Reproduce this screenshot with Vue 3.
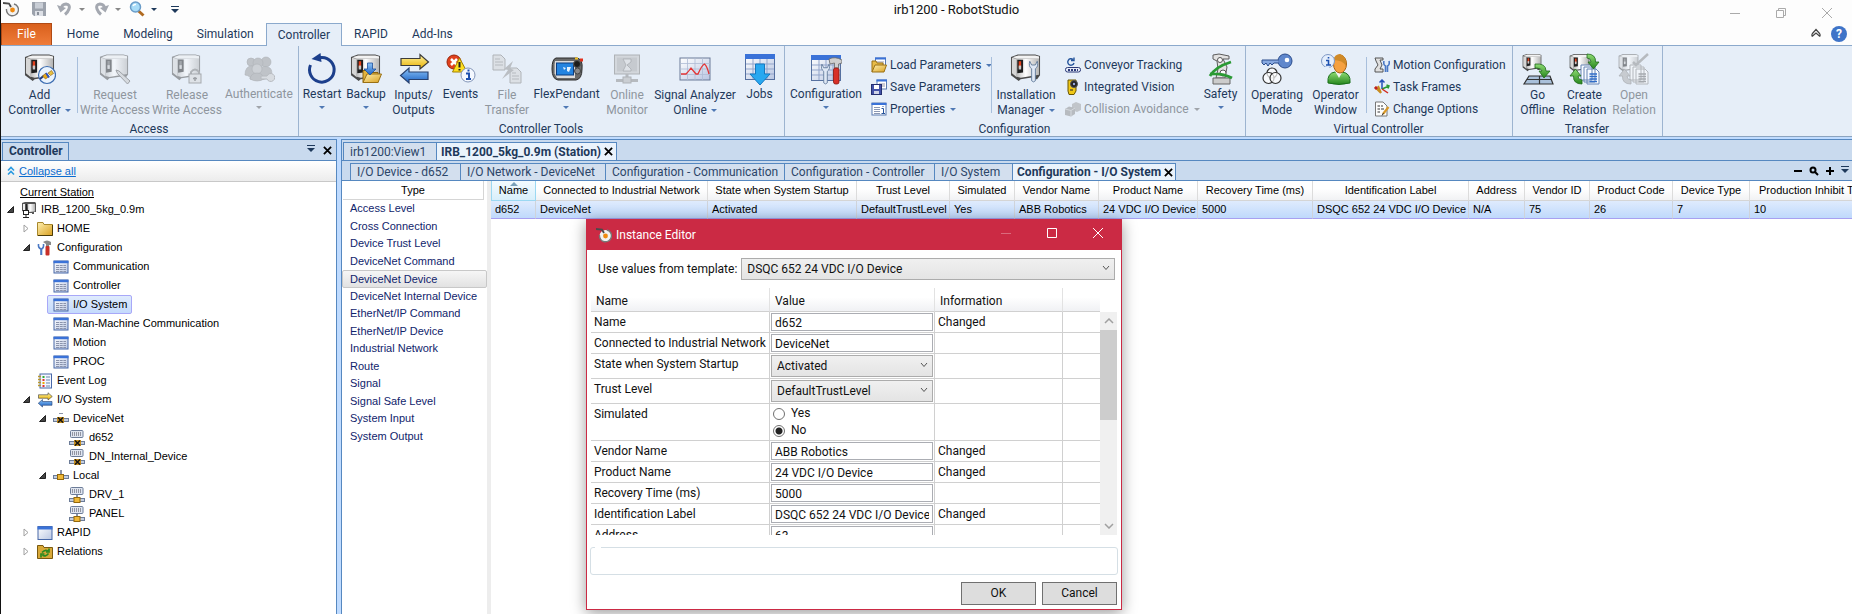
<template>
  <div class="app">
    <svg class="defs" width="0" height="0" aria-hidden="true">
      <defs>
        <linearGradient id="g-metal" x1="0" x2="1"><stop offset="0" stop-color="#bdbdbd" /><stop offset=".4" stop-color="#ffffff" /><stop offset="1" stop-color="#b4b4b4" /></linearGradient>
        <linearGradient id="g-folder" x1="0" y1="0" x2="1" y2="1"><stop offset="0" stop-color="#fff0b0" /><stop offset="1" stop-color="#d9a020" /></linearGradient>
        <linearGradient id="g-yellow" x1="0" y1="0" x2="0" y2="1"><stop offset="0" stop-color="#fff3a0" /><stop offset="1" stop-color="#e8b000" /></linearGradient>
        <linearGradient id="g-blue" x1="0" y1="0" x2="0" y2="1"><stop offset="0" stop-color="#8cc4f8" /><stop offset="1" stop-color="#1c62c4" /></linearGradient>
        <linearGradient id="g-grid" x1="0" y1="0" x2="1" y2="1"><stop offset="0" stop-color="#ffffff" /><stop offset="1" stop-color="#b9c6e2" /></linearGradient>
        <linearGradient id="g-green" x1="0" y1="0" x2="0" y2="1"><stop offset="0" stop-color="#8fdc74" /><stop offset="1" stop-color="#25861c" /></linearGradient>
      </defs>

      <symbol id="i-cabinet" viewBox="0 0 32 32">
        <path d="M1 4 L8 1.500 H26 L31 3 V23 L28 27 H25 L24 25 L11 27 L9 29 L1 23 Z" fill="#4a4a4a" />
        <path d="M2 5 L7 6 V25 L2 21 Z" fill="#d6d6d6" />
        <path d="M7 6 H30 V22.500 L11 25.500 L7 24.500 Z" fill="url(#g-metal)" />
        <path d="M2.500 4.500 L8.500 2.500 H26 L30 3.500 V6 H7 Z" fill="#f2f2f2" />
        <path d="M7.500 7 H13.500 V20 L7.500 21 Z" fill="#1f1f1f" />
        <rect x="9" y="8.500" width="2.500" height="7" fill="#e2401c" />
        <rect x="9" y="13" width="2.500" height="4" fill="#c9c9c9" />
      </symbol>
      <symbol id="i-wrench" viewBox="0 0 16 32">
        <path d="M3 3 Q1 10 5.500 13 V29 Q8 32 10.500 29 V13 Q15 10 13 3 L10.500 8 H5.500 Z" fill="#dfe8f5" stroke="#5f7898" stroke-width="1.200" />
      </symbol>
      <symbol id="i-add" viewBox="0 0 32 32">
        <use href="#i-cabinet" width="31" height="31" />
        <circle cx="23" cy="22" r="8.500" fill="#eaf3fd" stroke="#3c6cb0" stroke-width="1.200" />
        <path d="M16 26 L20 22.500" stroke="#223a80" stroke-width="2" />
        <path d="M18.500 23 L22 20 L25 23.500 L21.500 26 Z" fill="#e8a818" stroke="#8a5a08" stroke-width=".6" />
        <path d="M24 20 L27.500 17.500 L29.500 20.500 L26.500 22.500Z" fill="#e8c040" stroke="#8a5a08" stroke-width=".6" />
        <path d="M22 20 L25 24.500" stroke="#2c50c0" stroke-width="2" />
      </symbol>
      <symbol id="i-request" viewBox="0 0 32 32">
        <use href="#i-cabinet" width="30" height="30" />
        <path d="M17 17 L20 18 L31 28 L28.500 31 L18.500 20.500 Z" fill="#c8c8c8" stroke="#555" />
      </symbol>
      <symbol id="i-release" viewBox="0 0 32 32">
        <use href="#i-cabinet" width="30" height="30" />
        <path d="M20 22 V19 Q24 14 28 19 V22" fill="none" stroke="#777" stroke-width="2" />
        <rect x="18" y="21" width="12" height="9" fill="#d8d8d8" stroke="#666" />
        <path d="M24 24 V28 M22 25.500 H26" stroke="#555" stroke-width="1.500" />
      </symbol>
      <symbol id="i-auth" viewBox="0 0 32 32">
        <g fill="#9a9a9a" stroke="#777" stroke-width=".6">
          <circle cx="8" cy="9" r="4" /><circle cx="23" cy="9" r="5" /><circle cx="15" cy="10" r="5" />
          <path d="M2 22 Q2 13 9 13 Q13 13 14 17 Q20 11 27 15 Q30 18 28 24 L22 26 Q14 29 7 26 Q8 23 2 22Z" />
          <circle cx="14" cy="16" r="5" fill="#b5b5b5" />
          <path d="M7 26 Q8 20 14 20 Q20 20 21 26 Q14 30 7 26Z" />
        </g>
        <path d="M18 23 H24 A4 4 0 1 1 24 26 H18Z" fill="#ccc" stroke="#888" />
      </symbol>
      <symbol id="i-restart" viewBox="0 0 32 32">
        <path d="M4.500 12 A12.300 12.300 0 1 0 16 4.500 H12" fill="none" stroke="#1c3f8c" stroke-width="3" />
        <path d="M14.500 0 L15.500 9 L5.500 6 Z" fill="#1c3f8c" />
      </symbol>
      <symbol id="i-folder" viewBox="0 0 20 16">
        <path d="M1 15 V3 H7 L9 5 H16 V15Z" fill="#e3b33c" stroke="#8a6310" />
        <path d="M1 15 L5 6.500 H19.500 L16 15 Z" fill="url(#g-folder)" stroke="#9a7014" />
      </symbol>
      <symbol id="i-backup" viewBox="0 0 32 32">
        <use href="#i-cabinet" width="31" height="31" />
        <use href="#i-folder" x="12" y="14" width="20" height="17" />
        <path d="M17.500 10 H22.500 V16 H26 L20 22 L14 16 H17.500 Z" fill="url(#g-blue)" stroke="#1c4f9c" stroke-width=".8" />
      </symbol>
      <symbol id="i-inout" viewBox="0 0 32 32">
        <path d="M3 5.500 H22 V1.500 L30.500 9 L22 16 V12.500 H3 Z" fill="url(#g-yellow)" stroke="#3b3b3b" stroke-width="1.200" />
        <path d="M30 19 H11 V15 L2.500 22.500 L11 30 V26.500 H30 Z" fill="url(#g-blue)" stroke="#27406e" stroke-width="1.200" />
      </symbol>
      <symbol id="i-events" viewBox="0 0 32 32">
        <circle cx="9" cy="9" r="7" fill="#e0401c" stroke="#9a2408" />
        <path d="M6 6 L12 12 M12 6 L6 12" stroke="#fff" stroke-width="2.500" />
        <path d="M14.500 5 L22 19 H7.500 Z" fill="#ffdf20" stroke="#a08000" />
        <path d="M14.500 9 V14.500 M14.500 16 V17.500" stroke="#222" stroke-width="2" />
        <circle cx="23" cy="22" r="7" fill="#f4f8ff" stroke="#8496b8" />
        <path d="M21 20.500 H24 V26 M21 26 H26 M23.500 16.500 V18.500" stroke="#1c50b0" stroke-width="2" fill="none" />
      </symbol>
      <symbol id="i-transfer" viewBox="0 0 32 32">
        <path d="M2 2 H10 L14 6 V17 H2 Z M19 15 H26 L30 19 V30 H19Z" fill="#d4d4d4" stroke="#7a7a7a" />
        <path d="M4 6 H9 M4 9 H12 M4 12 H12 M21 20 H25 M21 23 H28 M21 26 H28" stroke="#888" />
        <path d="M22 8 L13 16 L17 17 L11 26 L23 17 L19 15.500 Z" fill="#909090" />
      </symbol>
      <symbol id="i-flex" viewBox="0 0 32 32">
        <path d="M5 5 H26 Q32 6 31 16 Q31 26 25 27 H7 Q1 26 1 16 Q1 6 5 5Z" fill="#6a6a6a" stroke="#2a2a2a" />
        <path d="M4 8 H24 V25 H6 Q2 20 4 8Z" fill="#dcdcdc" /><path d="M3.500 11 V21" stroke="#999" />
        <rect x="5.500" y="10" width="17" height="12" fill="#2484e0" stroke="#0b3c80" />
        <path d="M12 14 L15 15 L13 17Z M16 14 H20 L18 19 L16 18Z" fill="#e4f2ff" />
        <circle cx="26" cy="11" r="3.500" fill="#1b1b1b" stroke="#555" /><circle cx="26.500" cy="18" r="3" fill="#8a8a8a" stroke="#444" />
        <rect x="29" y="5.500" width="3" height="3" fill="#e2301c" /><rect x="24" y="4.500" width="3" height="2" fill="#f0c020" />
      </symbol>
      <symbol id="i-monitor" viewBox="0 0 32 32">
        <rect x="3.500" y="2" width="25" height="19" fill="#c2c2c2" stroke="#777" /><rect x="6" y="4.500" width="20" height="14" fill="#a8a8a8" />
        <path d="M12 6 H20 V9 L16 12 L20 16 V18 H12 L15 12Z" fill="#d8d8d8" stroke="#666" stroke-width=".7" />
        <path d="M16 21 V25 M5 27.500 H27" stroke="#888" stroke-width="3" /><rect x="12" y="24" width="8" height="6" fill="#b0b0b0" stroke="#777" />
      </symbol>
      <symbol id="i-signal" viewBox="0 0 32 32">
        <rect x="1" y="5" width="30" height="22" fill="url(#g-grid)" stroke="#6a7a98" />
        <path d="M1 10.500 H31 M1 16 H31 M1 21.500 H31 M8.500 5 V27 M16 5 V27 M23.500 5 V27" stroke="#aebbd4" stroke-width=".8" />
        <path d="M2 21 H7 Q10 18 12 15 L17 21 H19 Q23 12 25.500 11 Q28 13 30 21" fill="none" stroke="#e43434" stroke-width="1.300" />
      </symbol>
      <symbol id="i-grid" viewBox="0 0 32 32">
        <rect x="1.500" y="1.500" width="29" height="25" fill="url(#g-grid)" stroke="#56709f" />
        <rect x="1" y="1" width="30" height="5" fill="#3a72d8" />
        <path d="M2 11 H30 M2 16 H30 M2 21 H30 M9 6 V26 M16 6 V26 M23 6 V26" stroke="#93a5cb" />
      </symbol>
      <symbol id="i-jobs" viewBox="0 0 32 32">
        <use href="#i-grid" width="32" height="32" />
        <path d="M11.500 11 H20.500 V21 H26 L16 32 L6 21 H11.500 Z" fill="#28a8f0" stroke="#1478c0" />
      </symbol>
      <symbol id="i-config" viewBox="0 0 32 32">
        <use href="#i-grid" y="1" width="32" height="32" />
        <use href="#i-wrench" x="9" y="9" width="13" height="23" />
        <path d="M19 6 Q25 3 32 7 V10 L28.500 11 V15 H24.500 V10 L20 11Z" fill="#cfcfcf" stroke="#666" stroke-width=".8" />
        <rect x="23.500" y="15" width="5.500" height="16" rx="2" fill="#d83028" stroke="#8a140c" stroke-width=".8" />
      </symbol>
      <symbol id="i-install" viewBox="0 0 32 32">
        <use href="#i-cabinet" width="31" height="31" />
        <use href="#i-wrench" x="17" y="6" width="13" height="24" />
      </symbol>
      <symbol id="i-arm" viewBox="0 0 32 32">
        <path d="M8 2 L14 1 L24 3 V6 L18 6 L22 14 L20 25 H11 L13 16 L12 8 L8 6 Z" fill="#e2e2e2" stroke="#5c5c5c" />
        <path d="M8 25 H25 V31 H8 Z" fill="#cccccc" stroke="#666" /><circle cx="15" cy="7" r="2.500" fill="#fff" stroke="#555" /><circle cx="18" cy="20" r="3" fill="#fff" stroke="#555" />
      </symbol>
      <symbol id="i-safety" viewBox="0 0 32 32">
        <use href="#i-arm" width="32" height="32" />
        <path d="M26 9 Q10 14 5 23 M5 21 Q18 20 27 25" fill="none" stroke="#2a9a34" stroke-width="2.800" />
      </symbol>
      <symbol id="i-key" viewBox="0 0 32 32">
        <circle cx="24" cy="8" r="7" fill="#5f87cc" stroke="#2b4c8c" /><circle cx="26" cy="7" r="2.300" fill="#fff" />
        <path d="M17 7 H1 V10 L3 12 L5 10 L7 13 L9 10 L11 12 L13 10 H18" fill="#86a8e0" stroke="#2b4c8c" />
        <g fill="#fff" fill-opacity=".7" stroke="#333" stroke-width="1.200"><circle cx="11" cy="20" r="5" /><circle cx="7.500" cy="25" r="5.500" /><circle cx="14.500" cy="25" r="5.500" /></g>
      </symbol>
      <symbol id="i-operator" viewBox="0 0 32 32">
        <path d="M8 30 Q7 20 15 19 H22 Q31 20 30 30 Q19 33 8 30Z" fill="url(#g-green)" stroke="#1a701a" />
        <path d="M15 18 L19 25 L23 18Z" fill="#f5f5f5" />
        <ellipse cx="20" cy="11" rx="6.500" ry="9" fill="#f5a040" stroke="#a86010" />
        <path d="M13 7 Q15 1 20 1 Q27 3 26 13 Q23 7 13 7Z" fill="#d08a28" />
        <circle cx="8" cy="8" r="6.500" fill="#e4eefc" stroke="#7f98c4" /><path d="M5 14 L3 19 L10 14Z" fill="#e4eefc" />
        <path d="M6 7.500 H8.500 V12 M6 12 H11 M8.500 4 V5.500" stroke="#1c50b0" stroke-width="1.600" fill="none" />
      </symbol>
      <symbol id="i-offline" viewBox="0 0 32 32">
        <use href="#i-cabinet" width="20" height="20" />
        <path d="M7 23 H28 L31 31 H2 Z M5 26.500 H30 M17.500 23 V31" fill="#a9c0da" stroke="#333" stroke-width="1.200" />
        <path d="M13 11 Q24 10 24 18 H28 L22 25 L17 18 H20 Q19 15 13 15 Z" fill="url(#g-green)" stroke="#1f6a1a" stroke-width=".8" />
      </symbol>
      <symbol id="i-docs" viewBox="0 0 32 32">
        <path d="M12 12 H23 V27 H12Z M15 14 H26 V29 H15Z M18 16 H27 L30 19 V31 H18 Z" fill="#f8fbff" stroke="#6684b4" />
        <path d="M20.500 21 H28 M20.500 23.500 H28 M20.500 26 H28 M20.500 28.500 H28" stroke="#2f6cc8" stroke-width="1.300" />
      </symbol>
      <symbol id="i-relation" viewBox="0 0 32 32">
        <use href="#i-cabinet" width="21" height="21" />
        <use href="#i-docs" width="32" height="32" />
        <path d="M18 1 Q27 1 26.500 9 H30 L24.500 16 L19 9 H22 Q22 5 18 5Z" fill="url(#g-green)" stroke="#1f6a1a" stroke-width=".8" />
        <path d="M13 31 Q4 31 4.500 23 H1 L6.500 16 L12 23 H9 Q9 27 13 27Z" fill="url(#g-green)" stroke="#1f6a1a" stroke-width=".8" />
      </symbol>
      <symbol id="i-openrel" viewBox="0 0 32 32">
        <use href="#i-cabinet" width="21" height="21" />
        <use href="#i-docs" width="32" height="32" />
        <path d="M30 1 L18 12 L15 9" fill="none" stroke="#888" stroke-width="2.500" />
        <path d="M13 31 Q4 31 4.500 23 H1 L6.500 16 L12 23 H9 Q9 27 13 27Z" fill="#aaa" stroke="#777" stroke-width=".8" />
      </symbol>

      <symbol id="i-load" viewBox="0 0 16 16">
        <rect x="4.500" y="1" width="10" height="9" fill="#fff" stroke="#5a7ab0" /><path d="M4 1.500 H15" stroke="#3a72d8" stroke-width="2" /><path d="M6 5 H13 M6 7 H13" stroke="#99a" />
        <path d="M1 15 V4 H5 L6 6 H12 V8" fill="#e8bc48" stroke="#9a7014" /><path d="M1 15 L4 8 H15.500 L13 15Z" fill="url(#g-folder)" stroke="#9a7014" />
      </symbol>
      <symbol id="i-saveparam" viewBox="0 0 16 16">
        <rect x="6" y="1" width="9.500" height="9" fill="#fff" stroke="#5a7ab0" /><path d="M5.500 1.500 H16" stroke="#3a72d8" stroke-width="2" /><path d="M8 5 H14 M8 7 H14" stroke="#99a" />
        <rect x=".5" y="5.500" width="10" height="10" fill="#4352a8" stroke="#252f70" /><rect x="3" y="6" width="5" height="4" fill="#fff" /><rect x="3" y="12" width="5" height="3" fill="#cfd4e8" />
      </symbol>
      <symbol id="i-props" viewBox="0 0 16 16">
        <rect x="1" y="2" width="14" height="12" fill="#fff" stroke="#5a7ab0" /><path d="M.5 3 H15.500" stroke="#3a72d8" stroke-width="2" />
        <path d="M3 6.500 H9 M3 8.500 H9 M3 10.500 H9 M3 12.500 H9" stroke="#8a97b4" /><path d="M10.500 7.500 H12.500 V12 M10.500 12.500 H14 M12 5 V6" stroke="#26539c" fill="none" />
      </symbol>
      <symbol id="i-conveyor" viewBox="0 0 16 16">
        <path d="M8 2.500 A3.200 3.200 0 1 0 9 6 M9 .5 V3.500 H6" fill="none" stroke="#24549c" stroke-width="1.400" />
        <rect x=".5" y="10.500" width="15" height="4.500" rx="2" fill="#e8ecf8" stroke="#2b3a78" /><path d="M3 13 H13" stroke="#2b3a78" stroke-width="2" stroke-dasharray="2 1" />
      </symbol>
      <symbol id="i-vision" viewBox="0 0 16 16">
        <path d="M3 1 H11 V12 L9 15.500 H4 L3 12Z" fill="#f0c818" stroke="#6a5600" /><circle cx="9" cy="5" r="3.500" fill="#222" stroke="#555" /><circle cx="9" cy="5" r="1.200" fill="#9ad" /><path d="M5 11 H8" stroke="#222" />
      </symbol>
      <symbol id="i-collision" viewBox="0 0 16 16">
        <path d="M7 3 L11 1 L16 3 V9 L12 11 L7 9Z" fill="#9d9d9d" /><path d="M0 8 L4 5.500 L10 7 V13 L6 15.500 L0 14Z" fill="#8a8a8a" /><path d="M0 8 L6 9.500 L10 7 M6 9.500 V15.500" stroke="#c4c4c4" fill="none" />
      </symbol>
      <symbol id="i-motion" viewBox="0 0 16 16">
        <path d="M1 1 H9 V3 H6 L8 8 L6 12 H9 V15 H1 V12 L4 8 L2 4Z" fill="#e0e0e0" stroke="#555" /><path d="M10 4 Q9 8 11.500 9 V15 M15 4 Q16 8 13.500 9 V15" stroke="#4a78c4" stroke-width="1.600" fill="none" />
      </symbol>
      <symbol id="i-frames" viewBox="0 0 16 16">
        <path d="M8 10 V1 M5.500 3.500 L8 1 L10.500 3.500" stroke="#2450b8" stroke-width="1.500" fill="none" /><path d="M8 10 L15 7 M12.500 6 L15 7 L14 9.500" stroke="#2a9a34" stroke-width="1.500" fill="none" />
        <path d="M8 10 L14 14" stroke="#d02c20" stroke-width="1.500" /><path d="M1 8 L7 14 M4 7 L7 14" stroke="#c88c20" stroke-width="2" /><path d="M1 8 L3 10" stroke="#c02020" stroke-width="3" />
      </symbol>
      <symbol id="i-options" viewBox="0 0 16 16">
        <path d="M1.500 1 H9 L13 5 V15 H1.500Z" fill="#fdfdfd" stroke="#777" /><path d="M3.500 5 H6 M3.500 8 H6 M3.500 11 H6 M7 5 H9 M7 8 H10" stroke="#777" stroke-width="1.300" /><path d="M14.500 6 L9 13" stroke="#d89828" stroke-width="2.200" /><path d="M9.500 12 L8 14.500" stroke="#333" />
      </symbol>

      <symbol id="i-ctrl" viewBox="0 0 16 16">
        <path d="M1 1 L4 0 H14 L15 1 V10 H13 V12 H11 V11 H7 L1 9Z" fill="#555" /><path d="M6 2 H14 V9.500 L7 10Z" fill="url(#g-metal)" /><path d="M2 2 H4 V8 H2Z" fill="#eee" /><path d="M5 2 H6.500 V8 H5Z" fill="#222" />
        <rect x="2.500" y="8.500" width="5" height="4" fill="#fff" stroke="#222" /><path d="M5 13 V15 M2 15.500 H8" stroke="#222" />
      </symbol>
      <symbol id="i-home" viewBox="0 0 16 16">
        <path d="M.5 14.500 V1.500 H6 L7 3.500 H15.500 V14.500Z" fill="url(#g-folder)" stroke="#a8882c" /><path d="M15.500 4 V14.500 H1" fill="none" stroke="#4c3c08" />
      </symbol>
      <symbol id="i-tools" viewBox="0 0 16 16">
        <path d="M1.500 4 Q1 8 4 9 V15 M6.500 4 Q7 8 4.500 9 V15" fill="none" stroke="#4a78c4" stroke-width="1.600" /><path d="M6 2 Q10 -1 14 2 V5 H12 V7 H9 V4Z" fill="#888" /><rect x="8.500" y="6" width="4" height="9.500" rx="1" fill="#c83028" />
      </symbol>
      <symbol id="i-tbl" viewBox="0 0 16 16">
        <rect x="1" y="2" width="14" height="12" fill="url(#g-grid)" stroke="#4868a8" /><path d="M.5 3 H15.500" stroke="#3a72d8" stroke-width="2.400" /><path d="M3 6.500 H13 M3 8.500 H13 M3 10.500 H13 M3 12.500 H13" stroke="#8a93ac" stroke-dasharray="3 .7" />
      </symbol>
      <symbol id="i-log" viewBox="0 0 16 16">
        <rect x="3" y="1" width="11.500" height="14" fill="#f4f6ff" stroke="#4868a8" /><path d="M1 3.500 H4 M1 6.500 H4 M1 9.500 H4 M1 12.500 H4" stroke="#b89830" stroke-width="1.500" />
        <path d="M9 4 H13 M9 7 H13 M9 10 H13 M9 13 H13" stroke="#68a" /><path d="M5.500 4 H7.500" stroke="#3a3" stroke-width="2" /><path d="M5.500 7 H7.500 M5.500 13 H7.500" stroke="#d33" stroke-width="2" /><path d="M5.500 10 H7.500" stroke="#ea0" stroke-width="2" />
      </symbol>
      <symbol id="i-bus" viewBox="0 0 16 16">
        <rect x=".5" y="7.500" width="15" height="3" fill="#c4cee0" stroke="#6c7c98" /><path d="M8 2 V7" stroke="#8a94a8" stroke-width="2" /><rect x="4.500" y="6.500" width="6" height="5" fill="#efb838" stroke="#94680c" />
      </symbol>
      <symbol id="i-bus-x" viewBox="0 0 16 16">
        <rect x=".5" y="7.500" width="15" height="3" fill="#c4cee0" stroke="#6c7c98" /><path d="M6 2.500 H10" stroke="#8a94a8" /><rect x="4" y="6" width="7" height="6" fill="#c89020" /><path d="M5 6.500 L10 11.500 M10 6.500 L5 11.500" stroke="#111" stroke-width="1.500" />
      </symbol>
      <symbol id="i-dev" viewBox="0 0 16 16">
        <rect x="1.500" y=".5" width="12.500" height="7" rx="1" fill="#dfe5f0" stroke="#6c7c98" /><path d="M3 3 H13 M3 5 H13" stroke="#445" stroke-dasharray="1 1" />
        <path d="M8 8 V11" stroke="#8a94a8" stroke-width="2" /><rect x=".5" y="11.500" width="15" height="3" fill="#c4cee0" stroke="#6c7c98" /><rect x="5" y="10.500" width="6" height="5" fill="#efb838" stroke="#94680c" />
      </symbol>
      <symbol id="i-dev-x" viewBox="0 0 16 16">
        <rect x="1.500" y=".5" width="12.500" height="7" rx="1" fill="#dfe5f0" stroke="#6c7c98" /><path d="M3 3 H13 M3 5 H13" stroke="#445" stroke-dasharray="1 1" />
        <rect x=".5" y="11.500" width="15" height="3" fill="#c4cee0" stroke="#6c7c98" /><rect x="5" y="10" width="7" height="6" fill="#c89020" /><path d="M6 10.500 L11 15.500 M11 10.500 L6 15.500" stroke="#111" stroke-width="1.500" />
      </symbol>
      <symbol id="i-window" viewBox="0 0 16 16">
        <rect x="1" y="1.500" width="14" height="13" fill="url(#g-grid)" stroke="#4868a8" /><path d="M.5 3 H15.500" stroke="#3a72d8" stroke-width="3" />
      </symbol>
      <symbol id="i-relations" viewBox="0 0 16 16">
        <path d="M.5 14.500 V1.500 H6 L7 3.500 H15.500 V14.500Z" fill="#d8a838" stroke="#7a5a10" /><path d="M5 8.500 Q8 5 11 7 M12 4.500 V8 H9 M11.500 9.500 Q8 13.500 5.500 11 M4 13.500 V10 H7.500" fill="none" stroke="#2c8a20" stroke-width="1.700" />
      </symbol>
      <symbol id="i-app" viewBox="0 0 16 16">
        <circle cx="9.500" cy="9" r="6" fill="#f2f2f2" /><path d="M11 3 A6 6 0 1 1 3.500 8" fill="none" stroke="#777" stroke-width="1.400" /><circle cx="9.500" cy="9" r="2.400" fill="#f08a10" />
        <path d="M0 2 L6 2.500 L8 6" fill="none" stroke="#4a4a4a" stroke-width="1.800" />
      </symbol>
      <symbol id="i-save" viewBox="0 0 16 16">
        <path d="M1 1 H15 V15 H3 L1 13Z" fill="#9ca2ac" /><rect x="4" y="1.500" width="8" height="6" fill="#c9ced6" /><rect x="4" y="10" width="8" height="5" fill="#dde0e6" /><rect x="6" y="11" width="2" height="3" fill="#8a909a" />
      </symbol>
      <symbol id="i-undo" viewBox="0 0 16 16">
        <path d="M4 8 Q5 3 9 3 Q13.500 3.500 12 8 Q11 11 8 13.500" fill="none" stroke="#a4a8b0" stroke-width="3" /><path d="M0 4 L3.500 11.500 L9 7Z" fill="#a4a8b0" />
      </symbol>
      <symbol id="i-zoom" viewBox="0 0 16 16">
        <path d="M9 9.500 L14.500 14.500" stroke="#b06a20" stroke-width="3" /><circle cx="6.500" cy="6" r="5" fill="#a8dcf8" stroke="#6a9cc8" stroke-width="1.500" /><path d="M4 5 Q5 3 7 3.500" stroke="#fff" stroke-width="1.500" fill="none" />
      </symbol>
    </svg>

    <header class="titlebar">
      <div class="quick">
        <svg class="i16"><use href="#i-app" /></svg>
        <button class="q-save" aria-label="Save"><svg class="i16"><use href="#i-save" /></svg></button>
        <button aria-label="Undo"><svg class="i16"><use href="#i-undo" /></svg><i class="caret grey"></i></button>
        <button aria-label="Redo"><svg class="i16 flip"><use href="#i-undo" /></svg><i class="caret grey"></i></button>
        <button aria-label="Zoom"><svg class="i16"><use href="#i-zoom" /></svg><i class="caret dark"></i></button>
        <button aria-label="Customize"><i class="caret dark lined"></i></button>
      </div>
      <h1>irb1200 - RobotStudio</h1>
      <div class="win-buttons">
        <button aria-label="Minimize"><svg viewBox="0 0 12 12"><path d="M1 6.500 H11" /></svg></button>
        <button aria-label="Restore"><svg viewBox="0 0 12 12"><path d="M1.500 3.500 H8.500 V10.500 H1.500Z M3.500 3 V1.500 H10.500 V8.500 H9" /></svg></button>
        <button aria-label="Close"><svg viewBox="0 0 12 12"><path d="M1 1 L11 11 M11 1 L1 11" /></svg></button>
      </div>
    </header>

    <nav class="ribbon-tabs">
      <button class="file">File</button>
      <button v-for="tab in ribbonTabs" :key="tab" :class="{ active: tab === ribbonTab }" @click="ribbonTab = tab">{{ tab }}</button>
      <div class="ribbon-help">
        <button aria-label="Collapse ribbon"><svg width="10" height="10" viewBox="0 0 10 10"><path d="M1 6 L5 1.500 L9 6 M1 8.500 L5 5 L9 8.500 M1 6 V8.500 M9 6 V8.500" fill="none" stroke="#444" stroke-width="1.200" /></svg></button>
        <button class="help" aria-label="Help">?</button>
      </div>
    </nav>

    <section class="ribbon">
      <div v-for="group in ribbon" :key="group.name" class="group">
        <div class="group-body">
          <template v-for="(item, i) in group.items" :key="i">
            <div v-if="item.sep" class="sep"></div>
            <div v-else-if="item.stack" class="stack" :style="{ width: item.w + 'px' }">
              <button v-for="b in item.stack" :key="b.text" class="small" :disabled="b.off">
                <svg class="i16"><use :href="'#i-' + b.icon" /></svg>{{ b.text }}<i v-if="b.menu" class="caret"></i>
              </button>
            </div>
            <button v-else class="big" :class="{ single: item.lines.length === 1 }" :disabled="item.off" :style="{ width: item.w + 'px' }">
              <svg class="i32"><use :href="'#i-' + item.icon" /></svg>
              <span v-for="line in item.lines.slice(0, -1)" :key="line">{{ line }}</span>
              <span>{{ item.lines[item.lines.length - 1] }}<i v-if="item.menu" class="caret"></i></span>
            </button>
          </template>
        </div>
        <div class="group-name">{{ group.name }}</div>
      </div>
    </section>

    <main class="workspace">
      <aside class="browser">
        <div class="panel-head">
          <span class="panel-tab">Controller</span>
          <button aria-label="Panel menu"><i class="caret dark lined"></i></button>
          <button aria-label="Close panel"><svg class="x" viewBox="0 0 10 10"><path d="M1 1 L9 9 M9 1 L1 9" /></svg></button>
        </div>
        <div class="collapse">
          <svg width="8" height="10" viewBox="0 0 8 10"><path d="M1 4.500 L4 1.500 L7 4.500 M1 8.500 L4 5.500 L7 8.500" fill="none" stroke="#2a9ae0" stroke-width="1.600" /></svg>
          <a href="#">Collapse all</a>
        </div>
        <div class="station">Current Station</div>
        <ul class="tree">
          <li v-for="node in tree" :key="node.id" :class="['lvl' + node.level, { selected: node.id === selectedNode }]" @click="selectedNode = node.id">
            <span class="twist">
              <svg v-if="node.open" width="7" height="7" viewBox="0 0 7 7"><path d="M6.500 .5 V6.500 H.5Z" fill="#444" stroke="#222" /></svg>
              <svg v-else-if="node.open === false" width="6" height="9" viewBox="0 0 6 9"><path d="M1 1 L5 4.500 L1 8Z" fill="#fff" stroke="#a0a0a0" /></svg>
            </span>
            <span class="node"><svg class="i16"><use :href="'#i-' + node.icon" /></svg><span>{{ node.text }}</span></span>
          </li>
        </ul>
      </aside>

      <section class="document">
        <div class="doc-tabs">
          <button class="view">irb1200:View1</button>
          <button class="station-tab active">IRB_1200_5kg_0.9m (Station)<svg class="x" viewBox="0 0 10 10"><path d="M1 1 L9 9 M9 1 L1 9" /></svg></button>
        </div>
        <div class="sub-tabs">
          <button v-for="t in subTabs" :key="t.text" :class="{ active: t.active }" :style="{ width: t.w + 'px' }">
            {{ t.text }}<svg v-if="t.active" class="x" viewBox="0 0 10 10"><path d="M1 1 L9 9 M9 1 L1 9" /></svg>
          </button>
          <div class="sub-tools">
            <button aria-label="Zoom out"><svg viewBox="0 0 10 10"><path d="M1 5 H9" /></svg></button>
            <button aria-label="Search"><svg viewBox="0 0 10 10"><circle cx="4" cy="4" r="2.500" /><path d="M6 6 L9 9" /></svg></button>
            <button aria-label="Zoom in"><svg viewBox="0 0 10 10"><path d="M1 5 H9 M5 1 V9" /></svg></button>
            <button aria-label="More"><i class="caret dark lined"></i></button>
          </div>
        </div>
        <div class="content">
          <div class="types">
            <div class="types-head">Type</div>
            <ul>
              <li v-for="t in types" :key="t" :class="{ selected: t === selectedType }" @click="selectedType = t">{{ t }}</li>
            </ul>
          </div>
          <div class="grid">
            <table>
              <colgroup>
                <col v-for="c in columns" :key="c.name" :style="{ width: c.w + 'px' }" />
              </colgroup>
              <thead>
                <tr>
                  <th v-for="c in columns" :key="c.name"><i v-if="c.sorted" class="sort"></i>{{ c.name }}</th>
                </tr>
              </thead>
              <tbody>
                <tr><td v-for="c in columns" :key="c.name">{{ c.value }}</td></tr>
              </tbody>
            </table>
          </div>
        </div>
      </section>
    </main>

    <div class="dialog" role="dialog" aria-labelledby="dlg-title">
      <div class="dlg-head">
        <svg class="i16"><use href="#i-app" /></svg>
        <h2 id="dlg-title">Instance Editor</h2>
        <button aria-label="Minimize" disabled><svg viewBox="0 0 12 12"><path d="M1 6.500 H11" /></svg></button>
        <button aria-label="Maximize"><svg viewBox="0 0 12 12"><path d="M1.500 1.500 H10.500 V10.500 H1.500Z" /></svg></button>
        <button aria-label="Close"><svg viewBox="0 0 12 12"><path d="M1 1 L11 11 M11 1 L1 11" /></svg></button>
      </div>
      <div class="template-row">
        <label for="template">Use values from template:</label>
        <span class="combo">
          <select id="template" v-model="template"><option>DSQC 652 24 VDC I/O Device</option></select>
          <svg viewBox="0 0 8 6"><path d="M1 1 L4 4.500 L7 1" /></svg>
        </span>
      </div>
      <div class="props">
        <div class="props-clip">
          <table>
            <thead>
              <tr><th class="c-name">Name</th><th class="c-value">Value</th><th class="c-info">Information</th><th></th></tr>
            </thead>
            <tbody>
              <tr v-for="f in fields" :key="f.id" :class="f.kind">
                <td><label :for="f.id">{{ f.name }}</label></td>
                <td class="value">
                  <span v-if="f.kind === 'select'" class="combo">
                    <select :id="f.id" v-model="f.value"><option>{{ f.value }}</option></select>
                    <svg viewBox="0 0 8 6"><path d="M1 1 L4 4.500 L7 1" /></svg>
                  </span>
                  <template v-else-if="f.kind === 'radio'">
                    <label class="radio-line"><input :id="f.id" v-model="f.value" type="radio" name="sim" value="Yes" />Yes</label>
                    <label class="radio-line"><input v-model="f.value" type="radio" name="sim" value="No" />No</label>
                  </template>
                  <input v-else :id="f.id" v-model="f.value" type="text" />
                </td>
                <td>{{ f.info }}</td>
                <td></td>
              </tr>
            </tbody>
          </table>
        </div>
        <div class="scrollbar">
          <svg viewBox="0 0 10 6"><path d="M1 5 L5 1 L9 5" /></svg>
          <div class="thumb"></div>
          <svg viewBox="0 0 10 6"><path d="M1 1 L5 5 L9 1" /></svg>
        </div>
      </div>
      <fieldset class="message"><legend></legend></fieldset>
      <div class="dlg-buttons">
        <button>OK</button>
        <button>Cancel</button>
      </div>
    </div>
  </div>
</template>

<script setup>
import { ref } from 'vue'

const ribbonTabs = ['Home', 'Modeling', 'Simulation', 'Controller', 'RAPID', 'Add-Ins']
const ribbonTab = ref('Controller')

const ribbon = [
  {
    name: 'Access',
    items: [
      { icon: 'add', lines: ['Add', 'Controller'], menu: true, w: 73 },
      { sep: true },
      { icon: 'request', lines: ['Request', 'Write Access'], off: true, w: 72 },
      { icon: 'release', lines: ['Release', 'Write Access'], off: true, w: 72 },
      { icon: 'auth', lines: ['Authenticate'], menu: true, off: true, w: 72 },
    ],
  },
  {
    name: 'Controller Tools',
    items: [
      { icon: 'restart', lines: ['Restart'], menu: true, w: 42 },
      { icon: 'backup', lines: ['Backup'], menu: true, w: 46 },
      { icon: 'inout', lines: ['Inputs/', 'Outputs'], w: 49 },
      { icon: 'events', lines: ['Events'], w: 45 },
      { icon: 'transfer', lines: ['File', 'Transfer'], off: true, w: 48 },
      { icon: 'flex', lines: ['FlexPendant'], menu: true, w: 71 },
      { icon: 'monitor', lines: ['Online', 'Monitor'], off: true, w: 50 },
      { icon: 'signal', lines: ['Signal Analyzer', 'Online'], menu: true, w: 86 },
      { icon: 'jobs', lines: ['Jobs'], w: 43 },
    ],
  },
  {
    name: 'Configuration',
    items: [
      { icon: 'config', lines: ['Configuration'], menu: true, w: 78 },
      {
        w: 125,
        stack: [
          { icon: 'load', text: 'Load Parameters', menu: true },
          { icon: 'saveparam', text: 'Save Parameters' },
          { icon: 'props', text: 'Properties', menu: true },
        ],
      },
      { sep: true },
      { icon: 'install', lines: ['Installation', 'Manager'], menu: true, w: 66 },
      {
        w: 140,
        stack: [
          { icon: 'conveyor', text: 'Conveyor Tracking' },
          { icon: 'vision', text: 'Integrated Vision' },
          { icon: 'collision', text: 'Collision Avoidance', menu: true, off: true },
        ],
      },
      { icon: 'safety', lines: ['Safety'], menu: true, w: 43 },
    ],
  },
  {
    name: 'Virtual Controller',
    items: [
      { icon: 'key', lines: ['Operating', 'Mode'], w: 58 },
      { icon: 'operator', lines: ['Operator', 'Window'], w: 59 },
      { sep: true },
      {
        w: 141,
        stack: [
          { icon: 'motion', text: 'Motion Configuration' },
          { icon: 'frames', text: 'Task Frames' },
          { icon: 'options', text: 'Change Options' },
        ],
      },
    ],
  },
  {
    name: 'Transfer',
    items: [
      { icon: 'offline', lines: ['Go', 'Offline'], w: 45 },
      { icon: 'relation', lines: ['Create', 'Relation'], w: 49 },
      { icon: 'openrel', lines: ['Open', 'Relation'], off: true, w: 50 },
    ],
  },
]

const selectedNode = ref('io')
const tree = [
  { id: 'ctrl', level: 0, icon: 'ctrl', text: 'IRB_1200_5kg_0.9m', open: true },
  { id: 'home', level: 1, icon: 'home', text: 'HOME', open: false },
  { id: 'conf', level: 1, icon: 'tools', text: 'Configuration', open: true },
  { id: 'comm', level: 2, icon: 'tbl', text: 'Communication' },
  { id: 'contr', level: 2, icon: 'tbl', text: 'Controller' },
  { id: 'io', level: 2, icon: 'tbl', text: 'I/O System' },
  { id: 'mmc', level: 2, icon: 'tbl', text: 'Man-Machine Communication' },
  { id: 'motion', level: 2, icon: 'tbl', text: 'Motion' },
  { id: 'proc', level: 2, icon: 'tbl', text: 'PROC' },
  { id: 'log', level: 1, icon: 'log', text: 'Event Log' },
  { id: 'iosys', level: 1, icon: 'inout', text: 'I/O System', open: true },
  { id: 'dnet', level: 2, icon: 'bus-x', text: 'DeviceNet', open: true },
  { id: 'd652', level: 3, icon: 'dev-x', text: 'd652' },
  { id: 'dnint', level: 3, icon: 'dev-x', text: 'DN_Internal_Device' },
  { id: 'local', level: 2, icon: 'bus', text: 'Local', open: true },
  { id: 'drv', level: 3, icon: 'dev', text: 'DRV_1' },
  { id: 'panel', level: 3, icon: 'dev', text: 'PANEL' },
  { id: 'rapid', level: 1, icon: 'window', text: 'RAPID', open: false },
  { id: 'rel', level: 1, icon: 'relations', text: 'Relations', open: false },
]

const subTabs = [
  { text: 'I/O Device - d652', w: 110 },
  { text: 'I/O Network - DeviceNet', w: 145 },
  { text: 'Configuration - Communication', w: 179 },
  { text: 'Configuration - Controller', w: 150 },
  { text: 'I/O System', w: 78 },
  { text: 'Configuration - I/O System', w: 164, active: true },
]

const selectedType = ref('DeviceNet Device')
const types = [
  'Access Level',
  'Cross Connection',
  'Device Trust Level',
  'DeviceNet Command',
  'DeviceNet Device',
  'DeviceNet Internal Device',
  'EtherNet/IP Command',
  'EtherNet/IP Device',
  'Industrial Network',
  'Route',
  'Signal',
  'Signal Safe Level',
  'System Input',
  'System Output',
]

const columns = [
  { name: 'Name', value: 'd652', w: 45, sorted: true },
  { name: 'Connected to Industrial Network', value: 'DeviceNet', w: 172 },
  { name: 'State when System Startup', value: 'Activated', w: 149 },
  { name: 'Trust Level', value: 'DefaultTrustLevel', w: 93 },
  { name: 'Simulated', value: 'Yes', w: 65 },
  { name: 'Vendor Name', value: 'ABB Robotics', w: 84 },
  { name: 'Product Name', value: '24 VDC I/O Device', w: 99 },
  { name: 'Recovery Time (ms)', value: '5000', w: 115 },
  { name: 'Identification Label', value: 'DSQC 652 24 VDC I/O Device', w: 156 },
  { name: 'Address', value: 'N/A', w: 56 },
  { name: 'Vendor ID', value: '75', w: 65 },
  { name: 'Product Code', value: '26', w: 83 },
  { name: 'Device Type', value: '7', w: 77 },
  { name: 'Production Inhibit Time (ms)', value: '10', w: 156 },
]

const template = ref('DSQC 652 24 VDC I/O Device')
const fields = ref([
  { id: 'f-name', kind: 'text', name: 'Name', value: 'd652', info: 'Changed' },
  { id: 'f-net', kind: 'text', name: 'Connected to Industrial Network', value: 'DeviceNet' },
  { id: 'f-state', kind: 'select', name: 'State when System Startup', value: 'Activated' },
  { id: 'f-trust', kind: 'select', name: 'Trust Level', value: 'DefaultTrustLevel' },
  { id: 'f-sim', kind: 'radio', name: 'Simulated', value: 'No' },
  { id: 'f-vendor', kind: 'text', name: 'Vendor Name', value: 'ABB Robotics', info: 'Changed' },
  { id: 'f-product', kind: 'text', name: 'Product Name', value: '24 VDC I/O Device', info: 'Changed' },
  { id: 'f-recovery', kind: 'text', name: 'Recovery Time (ms)', value: '5000' },
  { id: 'f-label', kind: 'text', name: 'Identification Label', value: 'DSQC 652 24 VDC I/O Device', info: 'Changed' },
  { id: 'f-address', kind: 'text', name: 'Address', value: '63' },
])
</script>

<style>
body {
  overflow: hidden;
}
</style>

<style scoped>
.app {
  display: flex;
  flex-direction: column;
  position: relative;
  height: 100vh;
  box-sizing: border-box;
  border-left: 1px solid #111;
  background: #fdfdfd;
  color: #1e395b;
  font-family: Roboto, 'Open Sans', sans-serif;
  font-size: 12px;
  line-height: 15px;
}
.defs {
  position: absolute;
}
button {
  border: none;
  background: none;
  padding: 0;
  font: inherit;
  color: inherit;
}
ul {
  list-style: none;
  margin: 0;
  padding: 0;
}
.i16 {
  width: 16px;
  height: 16px;
  flex: none;
}
.i32 {
  width: 32px;
  height: 32px;
}
.flip {
  transform: scaleX(-1);
}
.x {
  flex: none;
  width: 9px;
  height: 9px;
  stroke: #000;
  stroke-width: 2;
}
.caret {
  display: inline-block;
  border: 3px solid transparent;
  border-top-color: #4f78b4;
  border-bottom: none;
}
.caret.grey {
  border-top-color: #888;
}
.caret.dark {
  border-top-color: #1e395b;
}
.caret.lined {
  position: relative;
  border-width: 4px 4px 0;
}
.caret.lined::before {
  content: '';
  position: absolute;
  top: -7px;
  left: -4px;
  width: 8px;
  height: 1px;
  background: #1e395b;
}

/* title bar */
.titlebar {
  display: flex;
  height: 23px;
}
.quick {
  display: flex;
  align-items: center;
  width: 180px;
  height: 18px;
  padding-left: 2px;
  gap: 8px;
}
.quick .q-save {
  margin: 0 2px 0 4px;
}
.quick button {
  display: flex;
  align-items: center;
  gap: 6px;
}
.quick .lined {
  margin: 4px 6px 0;
}
.titlebar h1 {
  flex: 1;
  margin: 0;
  text-align: center;
  font-size: 13px;
  font-weight: 400;
  line-height: 19px;
  color: #111;
}
.win-buttons {
  display: flex;
  width: 138px;
  margin-right: 2px;
  margin-left: -18px;
  align-items: center;
  justify-content: space-around;
  padding-top: 6px;
}
.win-buttons svg {
  width: 12px;
  height: 12px;
  fill: none;
  stroke: #aaa;
}

/* ribbon */
.ribbon-tabs {
  display: flex;
  align-items: stretch;
  height: 22px;
}
.ribbon-tabs > button {
  padding: 0 11px;
  border: 1px solid transparent;
  border-bottom: none;
}
.ribbon-tabs .file {
  padding: 0 15px;
  margin-right: 3px;
  background: linear-gradient(#d9601c, #ef7c3a);
  border-color: #b04a14;
  color: #fff;
}
.ribbon-tabs > .active {
  background: #e6eef8;
  border-color: #8ba9cc;
  margin-bottom: -1px;
  z-index: 1;
}
.ribbon-help {
  display: flex;
  align-items: center;
  gap: 10px;
  margin-left: auto;
  padding-right: 5px;
}
.help {
  width: 16px;
  height: 16px;
  border-radius: 50%;
  background: #3f74c8;
  color: #fff;
  font-weight: bold;
}
.ribbon {
  display: flex;
  flex: none;
  height: 92px;
  border-top: 1px solid #8ba9cc;
  border-bottom: 1px solid #8ba3bf;
  background: #e6eef8;
  box-sizing: border-box;
}
.group {
  display: flex;
  flex-direction: column;
  padding: 1px 3px 0 2px;
  border-right: 1px solid #9db4d0;
}
.group-body {
  display: flex;
  flex: 1;
  padding-top: 6px;
}
.group-name {
  text-align: center;
  line-height: 14px;
}
.sep {
  width: 1px;
  height: 56px;
  margin: 4px 1px 0;
  background: #a8bfdc;
}
.big {
  display: flex;
  flex-direction: column;
  align-items: center;
  white-space: nowrap;
}
.big .i32 {
  margin-bottom: 3px;
}
.big.single .i32 {
  margin-bottom: 2px;
}
.big .caret {
  margin-left: 4px;
  vertical-align: 2px;
}
.single span {
  display: flex;
  flex-direction: column;
  align-items: center;
}
.single .caret {
  margin: 4px 0 0;
}
.stack {
  padding: 1px 0 0 6px;
  box-sizing: border-box;
}
.small {
  display: flex;
  align-items: center;
  gap: 3px;
  height: 22px;
  white-space: nowrap;
}
.small .caret {
  margin-left: 2px;
}
button:disabled {
  color: #8f969e;
}
button:disabled .caret {
  border-top-color: #a0a4aa;
}
.ribbon button:disabled svg {
  filter: grayscale(1);
  opacity: 0.5;
}

/* workspace */
.workspace {
  display: flex;
  flex: 1;
  min-height: 0;
  gap: 4px;
  padding-top: 2px;
  background: #bfdbff;
  font-family: 'Liberation Sans', Arial, sans-serif;
  font-size: 11px;
  color: #000;
}
.browser {
  flex: none;
  width: 336px;
  box-sizing: border-box;
  border: 1px solid #5688c0;
  border-left: none;
  border-bottom: none;
  background: #fff;
}
.panel-head {
  display: flex;
  align-items: center;
  height: 20px;
  padding: 0 1px;
  border-bottom: 1px solid #5688c0;
  background: #c9daee;
}
.panel-tab {
  align-self: flex-end;
  margin-right: auto;
  padding: 0 5px 0 6px;
  height: 18px;
  border: 1px solid #5688c0;
  border-bottom: none;
  box-sizing: border-box;
  font: bold 12px/16px Roboto, sans-serif;
  color: #1e395b;
}
.panel-head button {
  display: flex;
  width: 16px;
  justify-content: center;
}
.collapse {
  display: flex;
  align-items: center;
  gap: 4px;
  height: 20px;
  padding-left: 6px;
  border-bottom: 1px solid #c8c8c8;
  background: linear-gradient(#fff, #ececec);
}
.collapse a {
  color: #0a6cd0;
}
.station {
  margin: 3px 0 0 19px;
  line-height: 15px;
  text-decoration: underline;
}
.tree li {
  display: flex;
  align-items: center;
  height: 19px;
  padding-left: 4px;
}
.tree .lvl1 {
  padding-left: 20px;
}
.tree .lvl2 {
  padding-left: 36px;
}
.tree .lvl3 {
  padding-left: 52px;
}
.twist {
  width: 12px;
  padding-left: 2px;
  line-height: 9px;
}
.twist svg {
  display: block;
}
.node {
  display: flex;
  align-items: center;
  gap: 4px;
  height: 19px;
  padding: 0 4px 0 1px;
  border: 1px solid transparent;
  border-radius: 2px;
  box-sizing: border-box;
}
.selected .node {
  border-color: #a8a8f8;
  background: linear-gradient(#dfebfd, #c4dafc);
  margin-left: -4px;
  padding-left: 5px;
}
.document {
  display: flex;
  flex-direction: column;
  flex: 1;
  min-width: 0;
  border: 1px solid #5688c0;
  border-right: none;
  border-bottom: none;
  background: #c9daee;
}
.doc-tabs,
.sub-tabs {
  display: flex;
  align-items: flex-end;
  height: 19px;
  border-bottom: 1px solid #5688c0;
  font: 12px/16px Roboto, sans-serif;
  color: #2c4669;
}
.doc-tabs button,
.sub-tabs > button {
  display: flex;
  align-items: center;
  gap: 3px;
  height: 18px;
  border: 1px solid #5688c0;
  border-bottom: none;
  border-right: none;
  box-sizing: border-box;
  background: #d3dfee;
  white-space: nowrap;
  padding: 0 6px;
}
.doc-tabs {
  padding-left: 1px;
  height: 20px;
}
.doc-tabs .view {
  width: 93px;
}
.doc-tabs .active,
.sub-tabs > .active {
  border-right: 1px solid #5688c0;
  background: #eaf3fc;
  color: #1e395b;
  font-weight: bold;
  padding: 0 3px 0 4px;
}
.sub-tabs {
  padding-left: 8px;
}
.sub-tabs > button {
  height: 17px;
}
.sub-tools {
  display: flex;
  align-self: center;
  gap: 6px;
  margin-left: auto;
  padding-right: 3px;
}
.sub-tools button {
  display: flex;
  align-items: center;
}
.sub-tools svg {
  width: 10px;
  height: 10px;
  fill: none;
  stroke: #000;
  stroke-width: 2;
}
.content {
  display: flex;
  flex: 1;
  min-height: 0;
  background: #fff;
}
.types {
  flex: none;
  width: 149px;
  box-sizing: border-box;
  border-right: 4px solid #ededed;
  color: #10246c;
}
.types-head {
  height: 18px;
  margin: 0 3px 0 1px;
  border-right: 1px solid #d5d5d5;
  border-bottom: 1px solid #d5d5d5;
  text-align: center;
  line-height: 18px;
  color: #000;
}
.types li {
  height: 18px;
  padding-left: 7px;
  line-height: 17px;
  border: 1px solid transparent;
  border-width: 0 1px;
  box-sizing: border-box;
}
.types li:nth-child(even) {
  height: 17px;
}
.types .selected {
  border: 1px solid #c8c8c8;
  border-radius: 2px;
  background: linear-gradient(#f6f6f6, #e2e2e2);
  line-height: 16px;
}
.grid {
  flex: 1;
  min-width: 0;
  overflow: hidden;
}
.grid table {
  table-layout: fixed;
  width: 1415px;
  border-collapse: separate;
  border-spacing: 0;
}
.grid th,
.grid td {
  overflow: hidden;
  padding: 0;
  white-space: nowrap;
  box-sizing: border-box;
}
.grid th {
  position: relative;
  height: 20px;
  border-right: 1px solid #dcdcdc;
  border-bottom: 1px solid #d5d5d5;
  background: linear-gradient(#fff 40%, #f1f2f4);
  font-weight: 400;
}
.grid th:first-child {
  border: 1px solid #9bd8f2;
  border-top: none;
  background: linear-gradient(#f4fbff, #d8effb);
}
.sort {
  position: absolute;
  top: 1px;
  left: 50%;
  margin-left: -4px;
  border: 4px solid transparent;
  border-top: none;
  border-bottom-color: #7aa0b8;
}
.grid td {
  height: 18px;
  padding-left: 4px;
  border-right: 1px solid #cfd3da;
  border-bottom: 1px solid #a8a0f0;
  background: linear-gradient(#dfebfd, #bfd9fc);
}

/* instance editor */
.dialog {
  position: absolute;
  left: 585px;
  top: 219px;
  width: 536px;
  box-sizing: border-box;
  border: 1px solid #cb2a44;
  background: #fff;
  box-shadow: 0 3px 14px rgba(0, 0, 0, 0.4);
  color: #111;
}
.dlg-head {
  display: flex;
  align-items: center;
  height: 30px;
  padding-left: 9px;
  background: #cb2a44;
  color: #fff;
}
.dlg-head h2 {
  flex: 1;
  margin: 0 0 0 4px;
  font-size: 12px;
  font-weight: 400;
}
.dlg-head button {
  width: 46px;
  height: 30px;
}
.dlg-head svg:not(.i16) {
  width: 12px;
  height: 12px;
  fill: none;
  stroke: #fff;
}
.dlg-head button:disabled {
  opacity: 0.3;
}
.template-row {
  display: flex;
  align-items: center;
  gap: 4px;
  padding: 8px 6px 8px 11px;
}
.combo {
  position: relative;
  display: flex;
  flex: 1;
}
.combo select {
  flex: 1;
  width: 100%;
  height: 22px;
  padding: 1px 5px 0;
  border: 1px solid #acacac;
  border-radius: 0;
  appearance: none;
  background: linear-gradient(#f0f0f0, #e4e4e4);
  font: inherit;
  color: inherit;
}
.combo svg {
  position: absolute;
  right: 5px;
  top: 7px;
  width: 8px;
  height: 6px;
  fill: none;
  stroke: #555;
  pointer-events: none;
}
.props {
  display: flex;
  padding: 0 4px;
}
.props-clip {
  flex: 1;
  height: 247px;
  overflow: hidden;
}
.props table {
  width: 100%;
  table-layout: fixed;
  border-collapse: separate;
  border-spacing: 0;
}
.props th,
.props td {
  box-sizing: border-box;
  height: 21px;
  padding: 3px 2px 0 3px;
  border-right: 1px solid #d0d0d0;
  border-bottom: 1px solid #d0d0d0;
  text-align: left;
  vertical-align: top;
  font-weight: 400;
  white-space: nowrap;
}
.props th {
  height: 24px;
  padding: 6px 5px 0;
  border-right: 1px solid #e2e2e2;
  background: linear-gradient(#fff 40%, #f0f1f4);
}
.props td:last-child,
.props th:last-child {
  border-right: none;
}
.c-name {
  width: 179px;
}
.c-value {
  width: 165px;
}
.c-info {
  width: 128px;
}
.props .value {
  padding: 1px;
}
.value input[type='text'] {
  display: block;
  width: 100%;
  height: 18px;
  box-sizing: border-box;
  padding: 1px 3px 0;
  border: 1px solid #abadb3;
  font: inherit;
  color: inherit;
}
.props .select td {
  height: 25px;
}
.props .radio td {
  height: 37px;
}
.radio-line {
  display: flex;
  align-items: center;
  gap: 6px;
  height: 17px;
}
.radio-line input {
  appearance: none;
  width: 12px;
  height: 12px;
  margin: 0 0 0 2px;
  border: 1px solid #707070;
  border-radius: 50%;
  background: #fff;
}
.radio-line input:checked {
  background: radial-gradient(circle, #222 3px, #fff 4px);
}
.scrollbar {
  display: flex;
  flex-direction: column;
  align-items: center;
  width: 17px;
  margin-top: 24px;
  background: #f0f0f0;
}
.scrollbar svg {
  width: 10px;
  height: 6px;
  margin: 6px 0;
  fill: none;
  stroke: #a0a0a0;
  stroke-width: 1.5;
}
.thumb {
  width: 17px;
  height: 90px;
  margin-bottom: auto;
  background: #cdcdcd;
}
.message {
  height: 28px;
  margin: 12px 3px 7px;
  padding: 0 4px;
  border: 1px solid #d5dfe5;
  border-radius: 3px;
  box-sizing: border-box;
}
.message legend {
  width: 6px;
  height: 1px;
  padding: 0;
}
.dlg-buttons {
  display: flex;
  justify-content: flex-end;
  gap: 6px;
  padding: 0 4px 4px;
}
.dlg-buttons button {
  width: 75px;
  height: 23px;
  border: 1px solid #707070;
  background: #ddd;
}
</style>
